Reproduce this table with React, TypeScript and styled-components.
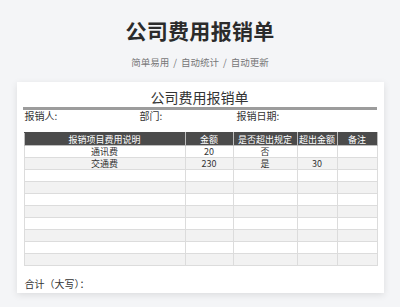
import * as React from 'react'
import styled, { createGlobalStyle } from 'styled-components'

const GlobalStyle = createGlobalStyle`
  html, body {
    margin: 0;
    padding: 0;
    background: #f4f5f7;
  }
  body {
    font-family: "Noto Sans CJK SC", "Noto Sans", "Liberation Sans", sans-serif;
    color: #333;
  }
`

const columns = [
  { title: '报销项目费用说明', width: 161 },
  { title: '金额', width: 48 },
  { title: '是否超出规定', width: 64 },
  { title: '超出金额', width: 40 },
  { title: '备注', width: 40 },
]

const rows: string[][] = [
  ['通讯费', '20', '否', '', ''],
  ['交通费', '230', '是', '30', ''],
  ...Array.from({ length: 8 }, () => ['', '', '', '', '']),
]

const tags = ['简单易用', '自动统计', '自动更新']

const App: React.FC = () => {
  return (
    <Page>
      <GlobalStyle />
      <Title>公司费用报销单</Title>
      <Tagline>
        {tags.map((t, i) => (
          <React.Fragment key={i}>
            {i > 0 && <Slash>/</Slash>}
            <span>{t}</span>
          </React.Fragment>
        ))}
      </Tagline>
      <Sheet>
        <SheetTitle>公司费用报销单</SheetTitle>
        <InfoRow>
          <span>报销人:</span>
          <span>部门:</span>
          <span>报销日期:</span>
        </InfoRow>
        <Table>
          <colgroup>
            {columns.map((c, i) => (
              <col key={i} style={{ width: c.width }} />
            ))}
          </colgroup>
          <thead>
            <tr>
              {columns.map((c, i) => (
                <HeadCell key={i}>{c.title}</HeadCell>
              ))}
            </tr>
          </thead>
          <tbody>
            {rows.map((r, i) => (
              <Row key={i} $striped={i % 2 === 1}>
                {r.map((v, j) => (
                  <Cell key={j}>{v}</Cell>
                ))}
              </Row>
            ))}
          </tbody>
        </Table>
        <Total>合计（大写）：</Total>
      </Sheet>
    </Page>
  )
}

export default App

const Page = styled.div`
  width: 400px;
  height: 307px;
  overflow: hidden;
  display: flex;
  flex-direction: column;
  align-items: center;
`

const Title = styled.h1`
  margin: 16px 0 0;
  font-size: 21px;
  line-height: 28px;
  font-weight: 700;
  color: #2b2b2b;
  letter-spacing: 0.3px;
`

const Tagline = styled.div`
  margin-top: 11px;
  display: flex;
  font-size: 9.5px;
  line-height: 14px;
  color: #777;
`

const Slash = styled.span`
  margin: 0 4px;
`

const Sheet = styled.div`
  margin-top: 13px;
  width: 367px;
  box-sizing: border-box;
  padding: 0 7px 3px;
  background: #fff;
  box-shadow: 0 2px 7px rgba(0, 0, 0, 0.1);
`

const SheetTitle = styled.div`
  padding-top: 5px;
  height: 20px;
  font-size: 14px;
  line-height: 20px;
  text-align: center;
  color: #333;
  border-bottom: 3px solid #9c9c9c;
  margin-left: -1px;
`

const InfoRow = styled.div`
  display: grid;
  grid-template-columns: 115px 97px 1fr;
  padding-left: 1px;
  font-size: 10px;
  line-height: 11px;
  color: #333;
`

const Table = styled.table`
  margin-top: 11px;
  width: 354px;
  border-collapse: collapse;
  table-layout: fixed;
  font-size: 9px;
`

const HeadCell = styled.th`
  height: 12px;
  padding: 0;
  background: #4b4b4b;
  color: #fff;
  font-weight: 400;
  line-height: 11px;
  text-align: center;
  border: 1px solid #bdbdbd;
  border-top-color: #4b4b4b;
  white-space: nowrap;
  overflow: hidden;
`

const Row = styled.tr<{ $striped: boolean }>`
  background: ${(p) => (p.$striped ? '#f2f2f2' : '#fff')};
`

const Cell = styled.td`
  height: 11px;
  padding: 0;
  line-height: 11px;
  text-align: center;
  color: #333;
  border: 1px solid #dcdcdc;
`

const Total = styled.div`
  margin-top: 12px;
  padding-left: 1px;
  font-size: 10px;
  line-height: 12px;
  color: #333;
`
